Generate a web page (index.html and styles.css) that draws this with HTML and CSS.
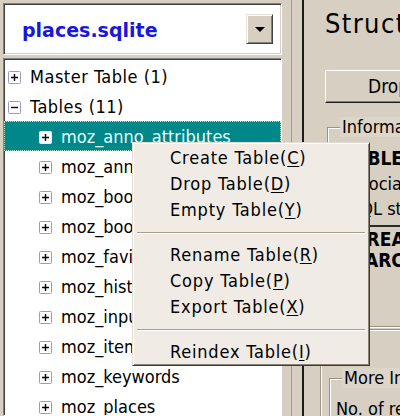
FILE: index.html
```html
<!DOCTYPE html>
<html>
<head>
<meta charset="utf-8">
<link rel="stylesheet" href="styles.css">
</head>
<body>
<div class="win">
  <div class="left">
    <div class="combo">
      <span class="dbname">places.sqlite</span>
      <span class="ddbtn"><span class="tri"></span></span>
    </div>
    <div class="tree">
      <div class="row top"><svg class="exp" viewBox="0 0 13 13"><rect x="0.5" y="0.5" width="12" height="12" rx="1" fill="#fff" stroke="#9a9ac4"/><path d="M3 6.5h7M6.5 3v7" stroke="#000" stroke-width="1.4"/></svg><span>Master Table (1)</span></div>
      <div class="row top"><svg class="exp" viewBox="0 0 13 13"><rect x="0.5" y="0.5" width="12" height="12" rx="1" fill="#fff" stroke="#9a9ac4"/><path d="M3 6.5h7" stroke="#000" stroke-width="1.4"/></svg><span>Tables (11)</span></div>
      <div class="row child sel"><svg class="exp" viewBox="0 0 13 13"><rect x="0.5" y="0.5" width="12" height="12" rx="1" fill="#fff" stroke="#e8f0f0"/><path d="M3 6.5h7M6.5 3v7" stroke="#000" stroke-width="1.4"/></svg><span>moz_anno_attributes</span></div>
      <div class="row child"><svg class="exp" viewBox="0 0 13 13"><rect x="0.5" y="0.5" width="12" height="12" rx="1" fill="#fff" stroke="#9a9ac4"/><path d="M3 6.5h7M6.5 3v7" stroke="#000" stroke-width="1.4"/></svg><span>moz_annos</span></div>
      <div class="row child"><svg class="exp" viewBox="0 0 13 13"><rect x="0.5" y="0.5" width="12" height="12" rx="1" fill="#fff" stroke="#9a9ac4"/><path d="M3 6.5h7M6.5 3v7" stroke="#000" stroke-width="1.4"/></svg><span>moz_bookmarks</span></div>
      <div class="row child"><svg class="exp" viewBox="0 0 13 13"><rect x="0.5" y="0.5" width="12" height="12" rx="1" fill="#fff" stroke="#9a9ac4"/><path d="M3 6.5h7M6.5 3v7" stroke="#000" stroke-width="1.4"/></svg><span>moz_bookmarks_roots</span></div>
      <div class="row child"><svg class="exp" viewBox="0 0 13 13"><rect x="0.5" y="0.5" width="12" height="12" rx="1" fill="#fff" stroke="#9a9ac4"/><path d="M3 6.5h7M6.5 3v7" stroke="#000" stroke-width="1.4"/></svg><span>moz_favicons</span></div>
      <div class="row child"><svg class="exp" viewBox="0 0 13 13"><rect x="0.5" y="0.5" width="12" height="12" rx="1" fill="#fff" stroke="#9a9ac4"/><path d="M3 6.5h7M6.5 3v7" stroke="#000" stroke-width="1.4"/></svg><span>moz_historyvisits</span></div>
      <div class="row child"><svg class="exp" viewBox="0 0 13 13"><rect x="0.5" y="0.5" width="12" height="12" rx="1" fill="#fff" stroke="#9a9ac4"/><path d="M3 6.5h7M6.5 3v7" stroke="#000" stroke-width="1.4"/></svg><span>moz_inputhistory</span></div>
      <div class="row child"><svg class="exp" viewBox="0 0 13 13"><rect x="0.5" y="0.5" width="12" height="12" rx="1" fill="#fff" stroke="#9a9ac4"/><path d="M3 6.5h7M6.5 3v7" stroke="#000" stroke-width="1.4"/></svg><span>moz_items_annos</span></div>
      <div class="row child"><svg class="exp" viewBox="0 0 13 13"><rect x="0.5" y="0.5" width="12" height="12" rx="1" fill="#fff" stroke="#9a9ac4"/><path d="M3 6.5h7M6.5 3v7" stroke="#000" stroke-width="1.4"/></svg><span>moz_keywords</span></div>
      <div class="row child"><svg class="exp" viewBox="0 0 13 13"><rect x="0.5" y="0.5" width="12" height="12" rx="1" fill="#fff" stroke="#9a9ac4"/><path d="M3 6.5h7M6.5 3v7" stroke="#000" stroke-width="1.4"/></svg><span>moz_places</span></div>
    </div>
  </div>
  <div class="split"><div class="sl1"></div><div class="sl2"></div></div>
  <div class="right">
    <div class="struct">Structure</div>
    <div class="btn">Drop Table</div>
    <fieldset class="group info">
      <legend>Information</legend>
      <div class="ln b l1">TABLE</div>
      <div class="ln l2">associated</div>
      <div class="ln l3">SQL statement</div>
      <div class="sqlbox">
        <div class="ln b l4">CREATE</div>
        <div class="ln b l5">VARCHAR</div>
      </div>
    </fieldset>
    <div class="lower">
      <fieldset class="group more">
        <legend>More Information</legend>
        <div class="ln l6">No. of records</div>
      </fieldset>
    </div>
  </div>
  <div class="menu">
    <div class="mi">Create Table(<u>C</u>)</div>
    <div class="mi">Drop Table(<u>D</u>)</div>
    <div class="mi">Empty Table(<u>Y</u>)</div>
    <div class="sep"></div>
    <div class="mi">Rename Table(<u>R</u>)</div>
    <div class="mi">Copy Table(<u>P</u>)</div>
    <div class="mi">Export Table(<u>X</u>)</div>
    <div class="sep"></div>
    <div class="mi">Reindex Table(<u>I</u>)</div>
  </div>
</div>
</body>
</html>
```
FILE: styles.css
```css
html, body {
  margin: 0;
  padding: 0;
}
body {
  width: 400px;
  height: 416px;
  overflow: hidden;
  background: #d6cfc2;
  font-family: "DejaVu Sans Condensed", "DejaVu Sans", sans-serif;
  font-size: 18px;
  color: #000;
}
.win {
  display: flex;
  height: 416px;
  position: relative;
  overflow: hidden;
}
.left {
  width: 282px;
  flex: none;
  box-sizing: border-box;
  padding: 3px 0 0 3px;
  display: flex;
  flex-direction: column;
  gap: 3px;
}
.combo {
  height: 52px;
  flex: none;
  box-sizing: border-box;
  background: #fff;
  border: 1px solid;
  border-color: #808080 #fff #fff #808080;
  box-shadow: inset 1px 1px 0 #404040, inset -1px -1px 0 #d4d0c8;
  display: flex;
  align-items: center;
  padding-left: 18px;
  padding-right: 8px;
}
.dbname {
  font-family: "DejaVu Sans", sans-serif;
  font-weight: bold;
  font-size: 19px;
  color: #1818d8;
  position: relative;
  top: 1px;
}
.ddbtn {
  margin-left: auto;
  width: 27px;
  height: 30px;
  box-sizing: border-box;
  background: #d6cfc2;
  border: 1px solid;
  border-color: #e4e0d8 #404040 #404040 #e4e0d8;
  box-shadow: inset 1px 1px 0 #fff, inset -1px -1px 0 #808080;
  display: flex;
  align-items: center;
  justify-content: center;
}
.tri {
  width: 0;
  height: 0;
  border-left: 5px solid transparent;
  border-right: 5px solid transparent;
  border-top: 5px solid #000;
}
.tree {
  flex: 1;
  box-sizing: border-box;
  background: #fff;
  border: 1px solid;
  border-color: #808080 #fff #fff #808080;
  box-shadow: inset 1px 1px 0 #404040;
  padding-top: 2px;
  overflow: hidden;
}
.row {
  height: 30px;
  display: flex;
  align-items: center;
  box-sizing: border-box;
  padding-left: 4px;
  white-space: nowrap;
}
.row.top span {
  letter-spacing: 0.5px;
}
.row.child {
  padding-left: 35px;
}
.exp {
  width: 13px;
  height: 13px;
  flex: none;
  margin-right: 9px;
  position: relative;
  top: 1px;
}
.row.sel {
  background: #008789;
  color: #e6ffff;
  border: 1px dotted #b8e8c8;
  padding-left: 34px;
}
.split {
  width: 22px;
  flex: none;
  display: flex;
  padding-left: 9px;
  gap: 10px;
  box-sizing: border-box;
}
.sl1 {
  width: 1px;
  background: #a29a8a;
}
.sl2 {
  width: 2px;
  background: #1c1c1c;
}
.right {
  flex: 1;
  min-width: 0;
  padding-left: 21px;
  white-space: nowrap;
  overflow: hidden;
}
.struct {
  font-size: 27px;
  line-height: 30px;
  margin-top: 9px;
  letter-spacing: 1.4px;
}
.btn {
  margin-top: 31px;
  width: 160px;
  height: 33px;
  box-sizing: border-box;
  border: 1px solid;
  border-color: #fff #1c1c1c #1c1c1c #fff;
  box-shadow: inset -1px -1px 0 #808080;
  font-size: 19px;
  line-height: 31px;
  padding-left: 42px;
}
.group {
  margin: 0 0 0 2px;
  padding: 0;
  border: 1px solid #9a9282;
  box-shadow: 1px 1px 0 #fff inset, 1px 1px 0 #fff;
  width: 140px;
}
.group legend {
  margin-left: 12px;
  padding: 0 2px;
  font-size: 18px;
  line-height: 20px;
  background: #dcd6ca;
}
.info {
  margin-top: 14px;
  height: 210px;
  box-sizing: border-box;
}
.ln {
  line-height: 25px;
}
.b {
  font-weight: bold;
  font-size: 19px;
}
.l1 { padding-left: 16px; margin-top: 9px; }
.l2 { padding-left: 14px; }
.l3 { padding-left: 22px; }
.sqlbox {
  margin-top: 4px;
  border-top: 2px solid #2a2a2a;
  padding-top: 2px;
}
.sqlbox .ln { line-height: 21px; }
.l4 { padding-left: 26px; }
.l5 { padding-left: 25px; }
.lower {
  margin-left: -5px;
  margin-top: 2px;
  border-top: 1px solid #9a9282;
  border-left: 1px solid #9a9282;
  box-shadow: inset 1px 1px 0 #fff;
  padding: 38px 0 0 6px;
  height: 80px;
}
.more {
  height: 80px;
}
.l6 { padding-left: 6px; margin-top: 8px; }
.menu {
  position: absolute;
  left: 132px;
  top: 142px;
  width: 238px;
  height: 224px;
  box-sizing: border-box;
  background: #f0ece5;
  border: 1px solid;
  border-color: #e2ddd4 #3a3a3a #3a3a3a #e2ddd4;
  box-shadow: inset 1px 1px 0 #fff, inset -1px -1px 0 #8a8478;
  padding: 2px 3px;
}
.mi {
  height: 26px;
  line-height: 26px;
  padding-left: 34px;
  letter-spacing: 0.8px;
  white-space: nowrap;
}
.mi u {
  text-underline-offset: 2px;
}
.sep {
  height: 0;
  margin: 9px 1px 8px;
  border-top: 1px solid #a89e8c;
  border-bottom: 1px solid #fff;
}
```
